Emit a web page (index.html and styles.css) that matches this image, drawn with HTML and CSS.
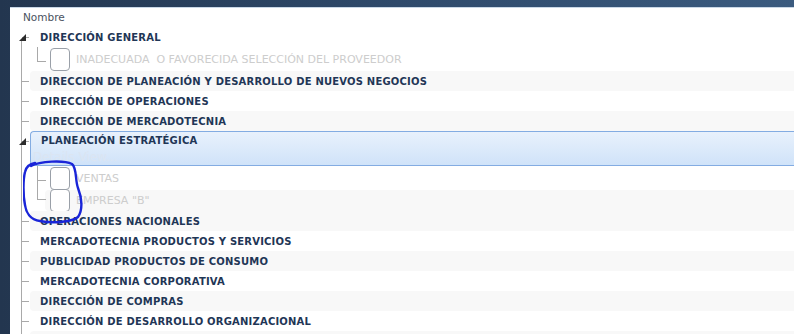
FILE: index.html
```html
<!DOCTYPE html>
<html lang="es">
<head>
<meta charset="utf-8">
<title>Árbol</title>
<link rel="stylesheet" href="styles.css">
</head>
<body>
<div class="panel">
  <div class="header">Nombre</div>
  <div class="tree">
    <div class="vline"></div>

    <div class="row">
      <span class="tick"></span>
      <svg class="toggle" width="7" height="7" viewBox="0 0 7 7"><polygon points="7,0 7,7 0,7" fill="#2b2b2b"/></svg>
      <div class="cell"><span class="label">DIRECCIÓN GENERAL</span></div>
    </div>
    <div class="child last">
      <span class="elbow"></span>
      <span class="box"></span>
      <span class="sublabel">INADECUADA  O FAVORECIDA SELECCIÓN DEL PROVEEDOR</span>
    </div>

    <div class="row"><span class="tick"></span><div class="cell alt"><span class="label">DIRECCION DE PLANEACIÓN Y DESARROLLO DE NUEVOS NEGOCIOS</span></div></div>
    <div class="row"><span class="tick"></span><div class="cell"><span class="label">DIRECCIÓN DE OPERACIONES</span></div></div>
    <div class="row"><span class="tick"></span><div class="cell alt"><span class="label">DIRECCIÓN DE MERCADOTECNIA</span></div></div>

    <div class="row sel-row">
      <span class="tick"></span>
      <svg class="toggle" width="7" height="7" viewBox="0 0 7 7"><polygon points="7,0 7,7 0,7" fill="#2b2b2b"/></svg>
      <div class="cell selected">
        <span class="label">PLANEACIÓN ESTRATÉGICA</span>
        <span class="ghost">Details View...</span>
      </div>
    </div>
    <div class="child">
      <span class="elbow"></span>
      <span class="box"></span>
      <span class="sublabel">VENTAS</span>
    </div>
    <div class="child last short">
      <span class="elbow"></span>
      <div class="subcell alt">
        <span class="box"></span>
        <span class="sublabel">EMPRESA "B"</span>
      </div>
    </div>

    <div class="row"><span class="tick"></span><div class="cell alt"><span class="label">OPERACIONES NACIONALES</span></div></div>
    <div class="row"><span class="tick"></span><div class="cell"><span class="label">MERCADOTECNIA PRODUCTOS Y SERVICIOS</span></div></div>
    <div class="row"><span class="tick"></span><div class="cell alt"><span class="label">PUBLICIDAD PRODUCTOS DE CONSUMO</span></div></div>
    <div class="row"><span class="tick"></span><div class="cell"><span class="label">MERCADOTECNIA CORPORATIVA</span></div></div>
    <div class="row"><span class="tick"></span><div class="cell alt"><span class="label">DIRECCIÓN DE COMPRAS</span></div></div>
    <div class="row"><span class="tick"></span><div class="cell"><span class="label">DIRECCIÓN DE DESARROLLO ORGANIZACIONAL</span></div></div>
    <div class="row"><span class="tick"></span><div class="cell alt"></div></div>

    <svg class="scribble" width="70" height="80" viewBox="0 0 70 80">
      <path d="M8,6 C17,1 41,0 49,4 C54,8 52,20 55,28 C59,38 60,50 55,57 C48,63 27,63 17,61 C7,60 3,52 2,45 C0,35 0,20 2,12 C3,7 6,4 12,3" fill="none" stroke="#1a25d8" stroke-width="2.4" stroke-linecap="round" stroke-linejoin="round"/>
    </svg>
  </div>
</div>
</body>
</html>
```

FILE: styles.css
```css
html, body {
  margin: 0;
  padding: 0;
  height: 100%;
  overflow: hidden;
}
body {
  background: linear-gradient(90deg, #23364f 0%, #2f4a6b 50%, #3b5b7f 100%);
  font-family: "DejaVu Sans", Verdana, sans-serif;
}
.panel {
  margin: 7px 0 0 10px;
  height: calc(100% - 7px);
  background: #fff;
  border-top: 1px solid #c9d7e6;
  box-sizing: border-box;
  overflow: hidden;
}
.header {
  height: 19px;
  line-height: 19px;
  padding-left: 13px;
  font-size: 10.5px;
  color: #4a5260;
}
.tree {
  position: relative;
}
.vline {
  position: absolute;
  left: 11px;
  top: 13px;
  bottom: -40px;
  width: 1px;
  background: #a9a9a9;
}
.row {
  position: relative;
  height: 20px;
  display: flex;
}
.tick {
  position: absolute;
  left: 12px;
  top: 10px;
  width: 7px;
  height: 1px;
  background: #a9a9a9;
}
.toggle {
  position: absolute;
  left: 9px;
  top: 7px;
}
.cell {
  margin-left: 20px;
  flex: 1;
  display: flex;
  align-items: center;
  padding-left: 10px;
  border-radius: 4px 0 0 4px;
}
.cell.alt {
  background: #f8f8f8;
}
.label {
  font-size: 10px;
  font-weight: bold;
  color: #1f3656;
  letter-spacing: 0.2px;
  white-space: pre;
}
.sel-row {
  height: 35px;
}
.cell.selected {
  position: relative;
  align-items: flex-start;
  padding-top: 3px;
  border: 1px solid #83ace2;
  border-right: none;
  background: linear-gradient(180deg, #e8f1fc 0%, #d0e3f9 100%);
  border-radius: 4px 0 0 4px;
}
.sel-row .toggle {
  top: 7px;
}
.ghost {
  position: absolute;
  left: 2px;
  top: 18px;
  font-size: 12px;
  color: #dbe5f2;
}
.child {
  position: relative;
  height: 24px;
  display: flex;
  align-items: center;
  padding-left: 40px;
}
.child.short {
  height: 21px;
}
.elbow {
  position: absolute;
  left: 27px;
  top: 0;
  bottom: 0;
  width: 8px;
  border-left: 1px solid #a9a9a9;
}
.elbow::after {
  content: "";
  position: absolute;
  left: 0;
  top: 14px;
  width: 8px;
  height: 1px;
  background: #a9a9a9;
}
.child.last .elbow {
  bottom: auto;
  height: 15px;
}
.child.short .elbow {
  height: 10px;
}
.child.short .elbow::after {
  top: 9px;
}
.box {
  width: 18px;
  height: 21px;
  border: 1px solid #9aa0a8;
  border-radius: 4px;
  background: #fff;
  flex: none;
}
.sublabel {
  margin-left: 6px;
  font-size: 11px;
  color: #cdcdcd;
  white-space: pre;
}
.subcell {
  flex: 1;
  display: flex;
  align-items: center;
  height: 21px;
  margin-left: -5px;
  padding-left: 5px;
  border-radius: 4px 0 0 4px;
}
.subcell.alt {
  background: #f8f8f8;
}
.scribble {
  position: absolute;
  left: 13px;
  top: 133px;
  pointer-events: none;
}
```
